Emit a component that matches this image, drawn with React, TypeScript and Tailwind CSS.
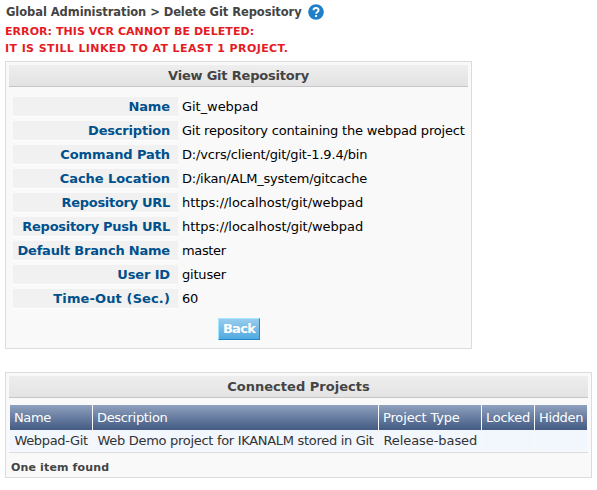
const details = [
  { label: 'Name', value: 'Git_webpad', ls: 'tracking-[-0.1px]', vs: 'tracking-[-0.05px]' },
  { label: 'Description', value: 'Git repository containing the webpad project', ls: 'tracking-[-0.2px]', vs: 'tracking-[-0.2px]' },
  { label: 'Command Path', value: 'D:/vcrs/client/git/git-1.9.4/bin', ls: 'tracking-[-0.1px]', vs: 'tracking-[-0.17px]' },
  { label: 'Cache Location', value: 'D:/ikan/ALM_system/gitcache', ls: 'tracking-[-0.07px]', vs: 'tracking-[-0.22px]' },
  { label: 'Repository URL', value: 'https://localhost/git/webpad', ls: 'tracking-[-0.3px]', vs: 'tracking-[-0.03px]' },
  { label: 'Repository Push URL', value: 'https://localhost/git/webpad', ls: 'tracking-[-0.28px]', vs: 'tracking-[-0.03px]' },
  { label: 'Default Branch Name', value: 'master', ls: 'tracking-[-0.2px]', vs: 'tracking-[-0.35px]' },
  { label: 'User ID', value: 'gituser', ls: 'tracking-[-0.15px]', vs: 'tracking-[-0.2px]' },
  { label: 'Time-Out (Sec.)', value: '60', ls: 'tracking-[0.12px]', vs: 'tracking-[-0.2px]' },
];

const columns = [
  { title: 'Name', value: 'Webpad-Git', ts: 'tracking-[-0.4px]', vs: 'tracking-[-0.36px]' },
  { title: 'Description', value: 'Web Demo project for IKANALM stored in Git', ts: 'tracking-[-0.33px]', vs: 'tracking-[-0.3px]' },
  { title: 'Project Type', value: 'Release-based', ts: 'tracking-[-0.15px]', vs: 'tracking-[-0.08px]' },
  { title: 'Locked', value: '', ts: 'tracking-[-0.25px]', vs: '' },
  { title: 'Hidden', value: '', ts: 'tracking-[-0.35px]', vs: '' },
];

function PanelTitle({ children, spacing }: { children: string; spacing: string }) {
  return (
    <h2 className={`h-[22px] border-b border-[#c6c6c6] bg-linear-to-b from-[#eeeeee] to-[#e3e3e3] text-center text-[13px] leading-[21px] font-bold text-[#444] ${spacing}`}>
      {children}
    </h2>
  );
}

export default function App() {
  return (
    <main className="h-[490px] w-[597px] overflow-hidden bg-white pl-[5px] font-['Verdana','DejaVu_Sans',sans-serif] text-[13px] whitespace-nowrap">
      <header className="flex h-[23px] items-center gap-[6px] pt-px pl-px">
        <h1 className="w-[296px] text-[11.5px] leading-[22px] font-bold tracking-[-0.07px] text-[#444]">Global Administration &gt; Delete Git Repository</h1>
        <svg className="size-4" viewBox="0 0 16 16" aria-label="Help">
          <circle cx="8" cy="8" r="7.8" fill="#1d80c8" />
          <path d="M5.5 6.2C5.6 3.4 10.6 3.2 10.6 6.1C10.6 8 8.2 7.9 8.1 9.8M8.1 11.1V12.9" fill="none" stroke="white" strokeWidth="1.9" />
        </svg>
      </header>
      <div className="h-[38px] text-[11px] leading-[17px] font-bold text-[#e51b24]">
        <p className="tracking-[0.06px]">ERROR: THIS VCR CANNOT BE DELETED:</p>
        <p className="tracking-[0.4px]">IT IS STILL LINKED TO AT LEAST 1 PROJECT.</p>
      </div>

      <section className="h-[288px] w-[467px] border border-[#dcdcdc] bg-[#f9f9f9] p-[3px]">
        <PanelTitle spacing="tracking-[-0.2px]">View Git Repository</PanelTitle>
        <dl className="mt-[10px] flex flex-col gap-1 pl-1">
          {details.map((d) => (
            <div key={d.label} className="flex h-5">
              <dt className={`w-[165px] shrink-0 border-b border-white bg-[#f1f1f1] pr-2 text-right leading-[19px] font-bold text-[#00508c] ${d.ls}`}>{d.label}</dt>
              <dd className={`pl-1 leading-[19px] text-black ${d.vs}`}>{d.value}</dd>
            </div>
          ))}
        </dl>
        <div className="flex justify-center pt-[9px]">
          <button className="h-[22px] w-[42px] border border-t-[#a5e6ff] border-r-[#2088cb] border-b-[#2088cb] border-l-[#a5e6ff] bg-linear-to-b from-[#98ccee] to-[#50a9e0] pl-px text-center leading-[20px] font-bold tracking-[-0.7px] text-white">
            Back
          </button>
        </div>
      </section>

      <section className="mt-[23px] h-[106px] w-[587px] border border-[#dcdcdc] bg-[#f9f9f9] p-[3px]">
        <PanelTitle spacing="tracking-[0.03px]">Connected Projects</PanelTitle>
        <div className="mt-[7px] border-b border-[#dcdcdc] px-px pb-px">
          <div className="grid h-[46px] grid-cols-[82px_285px_102px_52px_52px] grid-rows-[25px_21px] gap-x-px">
            {columns.map((c) => (
              <div key={c.title} className={`border-b border-[#465d85] bg-linear-to-b from-[#8fa1bf] to-[#465d85] pl-1 leading-[25px] text-white ${c.ts}`}>{c.title}</div>
            ))}
            {columns.map((c) => (
              <div key={c.title} className={`bg-[#f2f6fd] pl-[4.5px] leading-[21px] text-[#333] ${c.vs}`}>{c.value}</div>
            ))}
          </div>
        </div>
        <p className="pl-[2px] text-[11px] leading-[29px] font-bold tracking-[0.15px] text-[#444]">One item found</p>
      </section>
    </main>
  );
}
